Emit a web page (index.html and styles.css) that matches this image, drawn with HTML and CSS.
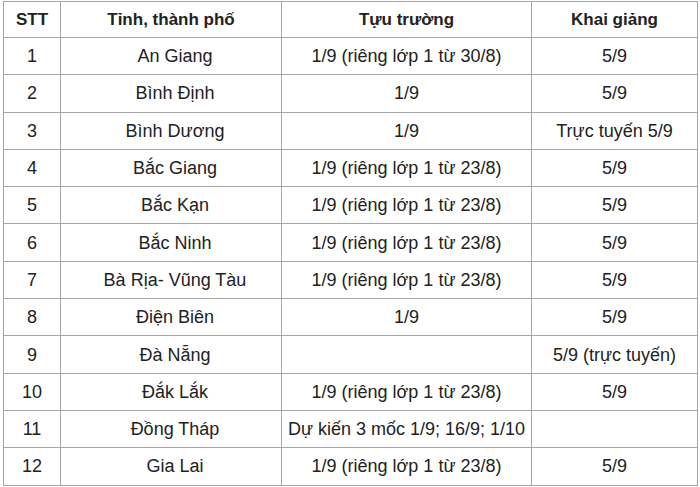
FILE: index.html
```html
<!DOCTYPE html>
<html lang="vi">
<head>
<meta charset="utf-8">
<link rel="stylesheet" href="styles.css">
</head>
<body>
<table class="sched">
  <colgroup>
    <col class="c1"><col class="c2"><col class="c3"><col class="c4">
  </colgroup>
  <thead>
    <tr><th>STT</th><th>Tỉnh, thành phố</th><th>Tựu trường</th><th>Khai giảng</th></tr>
  </thead>
  <tbody>
    <tr><td>1</td><td>An Giang</td><td>1/9 (riêng lớp 1 từ 30/8)</td><td>5/9</td></tr>
    <tr><td>2</td><td>Bình Định</td><td>1/9</td><td>5/9</td></tr>
    <tr><td>3</td><td>Bình Dương</td><td>1/9</td><td>Trực tuyến 5/9</td></tr>
    <tr><td>4</td><td>Bắc Giang</td><td>1/9 (riêng lớp 1 từ 23/8)</td><td>5/9</td></tr>
    <tr><td>5</td><td>Bắc Kạn</td><td>1/9 (riêng lớp 1 từ 23/8)</td><td>5/9</td></tr>
    <tr><td>6</td><td>Bắc Ninh</td><td>1/9 (riêng lớp 1 từ 23/8)</td><td>5/9</td></tr>
    <tr><td>7</td><td>Bà Rịa- Vũng Tàu</td><td>1/9 (riêng lớp 1 từ 23/8)</td><td>5/9</td></tr>
    <tr><td>8</td><td>Điện Biên</td><td>1/9</td><td>5/9</td></tr>
    <tr><td>9</td><td>Đà Nẵng</td><td></td><td>5/9 (trực tuyến)</td></tr>
    <tr><td>10</td><td>Đắk Lắk</td><td>1/9 (riêng lớp 1 từ 23/8)</td><td>5/9</td></tr>
    <tr><td>11</td><td>Đồng Tháp</td><td>Dự kiến 3 mốc 1/9; 16/9; 1/10</td><td></td></tr>
    <tr><td>12</td><td>Gia Lai</td><td>1/9 (riêng lớp 1 từ 23/8)</td><td>5/9</td></tr>
  </tbody>
</table>
</body>
</html>
```

FILE: styles.css
```css
html, body {
  margin: 0;
  padding: 0;
  background: #ffffff;
}
body {
  padding: 1px 0 0 3px;
  font-family: "Liberation Sans", Arial, sans-serif;
  color: #222222;
}
.sched {
  border-collapse: collapse;
  table-layout: fixed;
  width: 694px;
  font-size: 18px;
}
.c1 { width: 57px; }
.c2 { width: 221px; }
.c3 { width: 250px; }
.c4 { width: 166px; }
.sched th,
.sched td {
  border: 1px solid #a6a6a6;
  text-align: center;
  vertical-align: middle;
  padding: 1px 4px 0;
  height: 35.3px;
  white-space: nowrap;
  overflow: hidden;
}
.sched td:nth-child(2) {
  padding-left: 8px;
  padding-right: 0;
}
.sched th {
  font-weight: bold;
  font-size: 17px;
  height: 34px;
}
```
